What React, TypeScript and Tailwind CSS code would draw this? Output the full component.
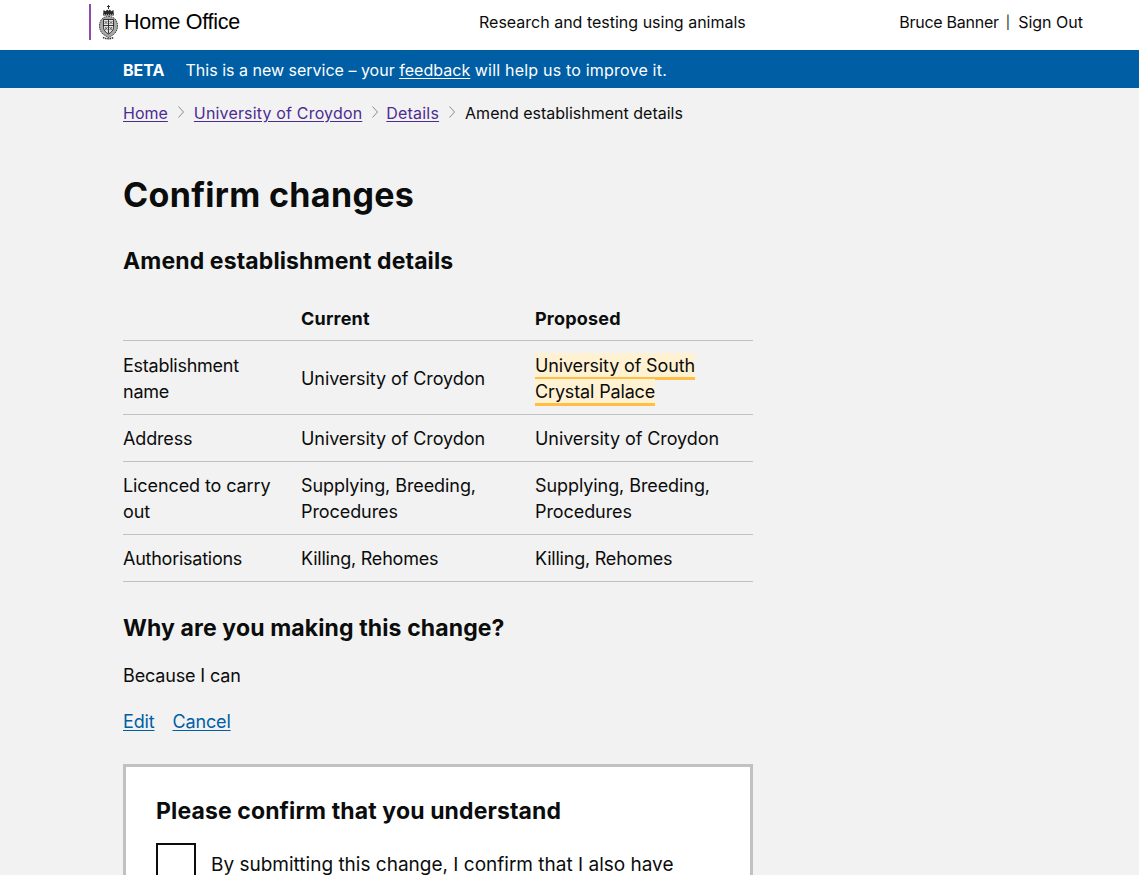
function Crest() {
  return (
    <svg width="21" height="35" viewBox="0 0 21 35" className="block">
      <path d="M10.5 0v4M9 1.5h3" stroke="#333" strokeWidth="1" fill="none" />
      <path d="M5.5 5l2.2 1.2 1.4-1.6 1.4 1.2 1.4-1.2 1.4 1.6 2.2-1.2 0.4 5.5h-10.8z" fill="#2a2a2a" />
      <path d="M6 9.5h9" stroke="#bbb" strokeWidth="0.8" strokeDasharray="1 1" />
      <path d="M10.5 11.5c5.5 0 9 3.5 9 9.5 0 4.5-2.5 8-5.5 9.5l-3.5 2-3.5-2c-3-1.5-5.5-5-5.5-9.5 0-6 3.5-9.5 9-9.5z" fill="#a8a8a8" stroke="#333" strokeWidth="0.9" strokeDasharray="1.6 0.7" />
      <path d="M5.5 14.5h10v8c0 3-2.5 5-5 6.5-2.5-1.5-5-3.5-5-6.5z" fill="#e6e6e6" stroke="#222" strokeWidth="0.9" />
      <path d="M10.5 14.5v14M5.5 20.5h10" stroke="#222" strokeWidth="0.9" />
      <path d="M6.5 16l3 3M9.5 16l-3 3M11.5 16l3 3M14.5 16l-3 3M7 22l2.500 3M9.5 22l-2.500 3M11.5 22l2.500 3M14 22l-2.500 3" stroke="#444" strokeWidth="0.8" />
      <path d="M5 32.5c3.500 1.500 7.500 1.500 11 0" stroke="#333" strokeWidth="1.6" strokeDasharray="1.5 0.7" fill="none" />
    </svg>
  );
}

function Chevron({ className }: { className: string }) {
  return (
    <svg width="8" height="14" viewBox="0 0 8 14" className={className}>
      <path d="M1.5 1.5l5 5.5-5 5.5" fill="none" stroke="#8a8a8a" strokeWidth="1" />
    </svg>
  );
}

const croydon = <span className="tracking-[-0.07px]">University of Croydon</span>;
const activities = <span className="tracking-[-0.08px]">Supplying, Breeding, Procedures</span>;

export default function App() {
  const firstCell = "pb-[9px] pr-5 pt-[12px]";
  const cell = "pb-[9px] pr-5 pt-[11px]";
  return (
    <div
      className="h-screen overflow-hidden bg-[#f2f2f2] text-[18px] leading-[26px] tracking-[-0.15px] text-[#0b0c0c]"
      style={{ fontFamily: "Inter, 'Liberation Sans', sans-serif" }}
    >
      <header className="flex h-[50px] items-center bg-white pb-[6px] pl-[89px] pr-[56px] text-[16px] tracking-normal">
        <div className="flex w-[390px] items-center">
          <div className="h-9 w-[2px] bg-[#8f4ba6]" />
          <div className="ml-[7px]"><Crest /></div>
          <span
            className="ml-[5px] text-[21.5px] tracking-[-0.3px] text-black"
            style={{ fontFamily: "'Liberation Sans', Arial, sans-serif" }}
          >
            Home Office
          </span>
        </div>
        <span>Research and testing using animals</span>
        <span className="ml-auto tracking-[-0.25px]">Bruce Banner</span>
        <span className="ml-[7px] mr-[8px] text-[13px]">|</span>
        <span>Sign Out</span>
      </header>

      <div className="flex h-[38px] items-center bg-[#005ea5] px-[123px] pt-[2px] text-[16px] tracking-normal text-white">
        <strong className="mr-[21px] font-bold">BETA</strong>
        <span>
          This is a new service – your <a className="tracking-[0.05px] underline underline-offset-2">feedback</a>{" "}
          <span className="tracking-[0.2px]">will help us to improve it.</span>
        </span>
      </div>

      <main className="px-[123px]">
        <nav className="flex h-[50px] items-center text-[16px] tracking-normal">
          <a className="text-[#4c2c92] underline underline-offset-2">Home</a>
          <Chevron className="mx-[9px] mb-[2px]" />
          <a className="tracking-[0.17px] text-[#4c2c92] underline underline-offset-2">University of Croydon</a>
          <Chevron className="ml-[9px] mr-[7px] mb-[2px]" />
          <a className="tracking-[0.2px] text-[#4c2c92] underline underline-offset-2">Details</a>
          <Chevron className="mx-[9px] mb-[2px]" />
          <span>Amend establishment details</span>
        </nav>

        <h1 className="mt-[34px] text-[34px] font-bold leading-[45px] tracking-[0.33px]">Confirm changes</h1>
        <h2 className="mt-[29px] text-[23px] font-bold leading-[30px] tracking-[0.12px]">Amend establishment details</h2>

        <table className="mt-[20px] w-[630px] table-fixed border-collapse">
          <thead>
            <tr className="border-b border-[#bfc1c3]">
              <th className="w-[178px] pb-[8px] pt-[10px]" />
              <th className="w-[234px] pb-[8px] pt-[10px] text-left font-bold tracking-[0.2px]">Current</th>
              <th className="pb-[8px] pt-[10px] text-left font-bold tracking-[0.2px]">Proposed</th>
            </tr>
          </thead>
          <tbody>
            <tr className="border-b border-[#bfc1c3]">
              <td className={firstCell}><span className="tracking-[-0.25px]">Establishment name</span></td>
              <td className={firstCell}>{croydon}</td>
              <td className={firstCell}>
                <span className="border-b-[3px] border-[#ffbf47] bg-[#fff2d3] pb-[1px] pt-[2px]">
                  University of South Crystal Palace
                </span>
              </td>
            </tr>
            <tr className="border-b border-[#bfc1c3]">
              <td className={cell}>Address</td>
              <td className={cell}>{croydon}</td>
              <td className={cell}>{croydon}</td>
            </tr>
            <tr className="border-b border-[#bfc1c3]">
              <td className={cell}><span className="tracking-[-0.1px]">Licenced to carry out</span></td>
              <td className={cell}>{activities}</td>
              <td className={cell}>{activities}</td>
            </tr>
            <tr className="border-b border-[#bfc1c3]">
              <td className={cell}><span className="tracking-[-0.25px]">Authorisations</span></td>
              <td className={cell}><span className="tracking-[-0.22px]">Killing, Rehomes</span></td>
              <td className={cell}><span className="tracking-[-0.22px]">Killing, Rehomes</span></td>
            </tr>
          </tbody>
        </table>

        <h2 className="mt-[31px] text-[23px] font-bold leading-[30px] tracking-[0.12px]">Why are you making this change?</h2>
        <p className="mt-[20px]">Because I can</p>
        <div className="mt-[20px] flex gap-[18px] text-[#005ea5]">
          <a className="underline underline-offset-2">Edit</a>
          <a className="underline underline-offset-2">Cancel</a>
        </div>

        <section className="mt-[29px] w-[630px] border-[3px] border-[#bfc1c3] bg-white px-[30px] pb-[30px] pt-[29px]">
          <h3 className="text-[23px] font-bold leading-[30px] tracking-[0.12px]">Please confirm that you understand</h3>
          <label className="mt-[17px] flex gap-[15px]">
            <span className="h-10 w-10 shrink-0 border-2 border-[#0b0c0c] bg-white" />
            <span className="mt-[9px] text-[19px] tracking-normal">By submitting this change, I confirm that I also have permission of the relevant people</span>
          </label>
        </section>
      </main>
    </div>
  );
}
